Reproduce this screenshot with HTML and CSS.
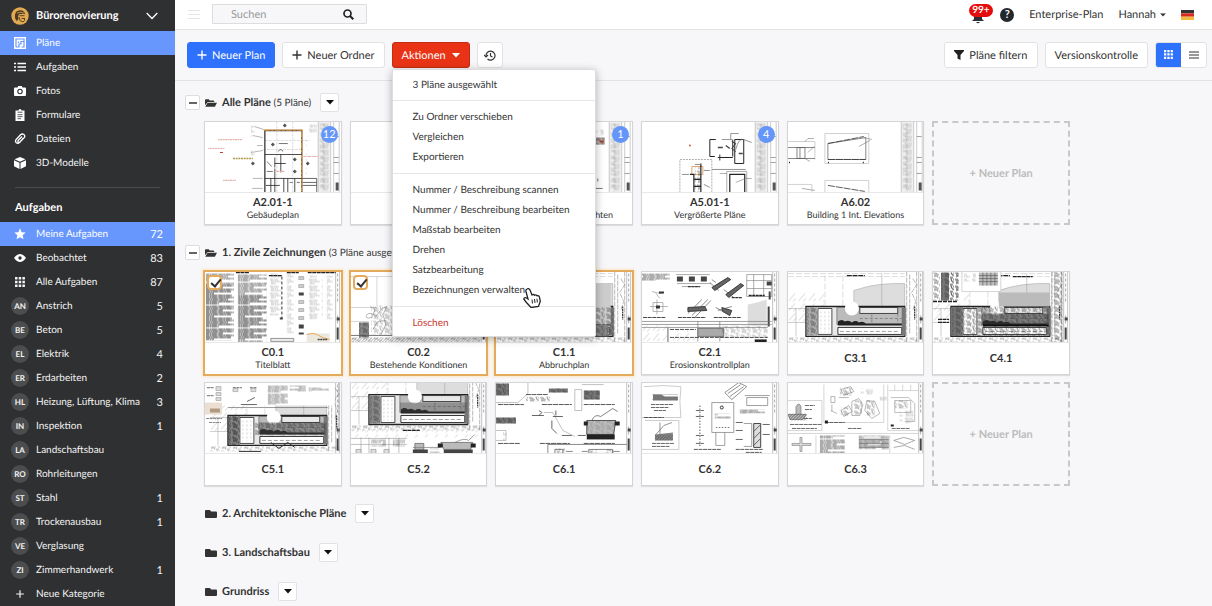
FILE: index.html
```
<!DOCTYPE html>
<html lang="de">
<head>
  <meta charset="UTF-8">
  <meta name="viewport" content="width=device-width, initial-scale=1">
  <title>Bürorenovierung – Pläne</title>
  <link rel="stylesheet" href="styles.css">
</head>
<body>

<!-- shared drawing parts -->
<svg class="defs" aria-hidden="true">
  <defs>
    <pattern id="text" width="31" height="23" patternUnits="userSpaceOnUse">
      <path d="M0 1h27M0 3h31M1 5h22M0 7h31M0 9h14M0 12h31M1 14h29M0 16h18M0 18h31M1 20h25M0 22h9" stroke="#444" stroke-width=".9" stroke-dasharray="4 .5 2 .4 5 .6 1 .3"/>
    </pattern>
    <pattern id="note" width="13" height="14" patternUnits="userSpaceOnUse">
      <path d="M0 1h9M1 3h7M1 5h10M0 8h8M1 10h10M1 12h5" stroke="#999" stroke-width=".7" stroke-dasharray="3 .6 1.5 .5"/>
    </pattern>
    <pattern id="grit" width="11" height="7" patternUnits="userSpaceOnUse">
      <path d="M0 1h3l1 2h2M7 0l1 3 2 1M1 5l3-1 1 2M6 6h3M9 1h1M2 2v2" fill="none" stroke="#333" stroke-width=".6"/>
    </pattern>
    <pattern id="hatch" width="3" height="3" patternUnits="userSpaceOnUse">
      <path d="M0 3L3 0" stroke="#444" stroke-width=".7"/>
    </pattern>
    <pattern id="wide-hatch" width="10" height="10" patternUnits="userSpaceOnUse">
      <path d="M1 9l6-7M5 10l3-3" stroke="#aaa" stroke-width=".5"/>
    </pattern>

    <symbol id="sheet-a" viewBox="0 0 136 71">
      <path d="M113.500 0h12v71h-12z" fill="#f0f0f0"/>
      <path d="M115 2h9v68h-9z" fill="url(#note)"/>
      <path d="M115 2h5v66h-5z" fill="url(#text)" opacity=".3"/>
      <path d="M113.500 0v71M126 0v71M129 0v71M134.500 0v71" stroke="#aaa" stroke-width=".6"/>
      <path d="M129 15h5M129 36h5M129 41h5M129 52h5" stroke="#777" stroke-width=".7"/>
      <path d="M131 61h3v8h-3z" fill="#555"/>
    </symbol>

    <symbol id="sheet-c" viewBox="0 0 136 71">
      <path d="M131 0v71M135 0v71" stroke="#999" stroke-width=".6"/>
      <path d="M133 2v30M133 44v10" stroke="#aaa" stroke-width="1" stroke-dasharray="3 2"/>
      <path d="M132 46h3v3h-3zM132 56h2v12h-2z" fill="#444"/>
    </symbol>

    <symbol id="site" viewBox="0 0 136 71">
      <path d="M0 2h117M0 5h117M37 4v31M55 4v31" stroke="#bbb" stroke-width=".5" stroke-dasharray="6 2"/>
      <path d="M0 21h36v30H0z" fill="url(#wide-hatch)"/>
      <path d="M59 4h18" stroke="#222" stroke-width="1.300" stroke-dasharray="5 .7"/>
      <path d="M66 19q22-8 51-7v23H66z" fill="#ddd" stroke="#999" stroke-width=".5"/>
      <path d="M94 2v34M0 37h18M0 51h18M8 37v28" stroke="#999" stroke-width=".5"/>
      <path d="M18 35h99v30H18z" fill="#e9e9e9" stroke="#222" stroke-width="1.300"/>
      <path d="M19 36h10v28H19z" fill="#aaa"/>
      <path d="M19 36h10v28H19z" fill="url(#grit)"/>
      <path d="M30 37h14v26H30z" fill="#fff" stroke="#222" stroke-width=".8"/>
      <path d="M33 40v21M37 40v21M41 40v21" stroke="#bbb" stroke-width=".6" stroke-dasharray="2 2"/>
      <path d="M49 36h67v17H49z" fill="#bbb" stroke="#555" stroke-width=".6"/>
      <circle cx="64" cy="37" r="7" fill="#fff"/>
      <path d="M72 36h38v6H72z" fill="#e8e8e8" stroke="#222" stroke-width=".8"/>
      <path d="M84 43v9M110 42v11M72 47h42" stroke="#555" stroke-width=".5" stroke-dasharray="3 2"/>
      <path d="M50 50q4-3 7 0q4-2 7 1q4-3 7 0q4-2 7 1h38v2H50z" fill="#222"/>
      <path d="M50 56h64v7H50z" fill="#fff" stroke="#222" stroke-width=".9"/>
      <path d="M52 60h60" stroke="#777" stroke-width=".7" stroke-dasharray="4 2"/>
      <path d="M114 36h4v28h-4z" fill="#777"/>
      <path d="M119 0v71M122 3v60M129 0v71M125 7l4 6-5 8 4 9-3 9" fill="none" stroke="#888" stroke-width=".6" stroke-dasharray="5 1"/>
      <path d="M127 35v13" stroke="#333" stroke-width="1.200" stroke-dasharray="2 .5"/>
      <path d="M0 66h130v5H0z" fill="url(#grit)" opacity=".7"/>
    </symbol>

    <symbol id="folder" viewBox="0 0 12 10">
      <path d="M1 1h4l1 1.500h5q1 0 1 1V8q0 1-1 1H1Q0 9 0 8V2q0-1 1-1z" fill="#333"/>
    </symbol>
    <symbol id="folder-open" viewBox="0 0 13 10">
      <path d="M0 7.500V2q0-1 1-1h3l1.200 1.200H9q1 0 1 1V4H3.500Q2.500 4 2 5z" fill="#333"/>
      <path d="M.3 9L2.800 4.700H13L10.700 9z" fill="#333"/>
    </symbol>
    <symbol id="caret" viewBox="0 0 8 5"><path d="M0 0h8L4 4.600z" fill="currentColor"/></symbol>
    <symbol id="plus" viewBox="0 0 10 10"><path d="M5 .5v9M.5 5h9" stroke="currentColor" stroke-width="1.400"/></symbol>
    <symbol id="grid" viewBox="0 0 10 10">
      <path d="M0 0h2.500v2.500H0zM3.700 0h2.500v2.500H3.700zM7.400 0h2.500v2.500H7.400zM0 3.700h2.500v2.500H0zM3.700 3.700h2.500v2.500H3.700zM7.400 3.700h2.500v2.500H7.400zM0 7.400h2.500v2.500H0zM3.700 7.400h2.500v2.500H3.700zM7.400 7.400h2.500v2.500H7.400z" fill="currentColor"/>
    </symbol>
  </defs>
</svg>

<div class="app">
  <aside class="sidebar">
    <button class="project">
      <svg class="avatar" viewBox="0 0 18 18">
        <circle cx="9" cy="9" r="8.700" fill="#e2aa50"/>
        <path d="M4 8Q4.500 3.500 9 3.200q4.500.3 5 3.800H8.500L7 9l.5 3L6 14Q3.500 12 4 8z" fill="#4b3a22"/>
        <path d="M6 6.200q3-2 7 0" fill="none" stroke="#e2aa50" stroke-width=".8"/>
        <path d="M8.500 8.700h5M10.500 11.500h3M8 10l1 3.500 3 1.500 1.500-1.500v-2.500" fill="none" stroke="#4b3a22" stroke-width=".9"/>
      </svg>
      <span>Bürorenovierung</span>
      <svg class="chevron" viewBox="0 0 12 8"><path d="M.7 1L6 6.500 11.300 1" fill="none" stroke="#fff" stroke-width="1.300"/></svg>
    </button>

    <nav class="nav">
      <a class="nav-item active" href="#">
        <svg class="nav-icon" viewBox="0 0 12 12"><path d="M0 0h12v12H0z" fill="#fff"/><path d="M2 10V2h8v8H7.500M2 10h3V7h2V4.500h3M4.500 4.500V6" fill="none" stroke="#6796fd" stroke-width="1.200"/></svg>
        <span>Pläne</span>
      </a>
      <a class="nav-item" href="#">
        <svg class="nav-icon" viewBox="0 0 12 12"><path d="M0 2.500h2M0 6h2M0 9.500h2M3.500 2.500H12M3.500 6H12M3.500 9.500H12" stroke="#fff" stroke-width="1.700"/></svg>
        <span>Aufgaben</span>
      </a>
      <a class="nav-item" href="#">
        <svg class="nav-icon" viewBox="0 0 12 12"><path d="M1 2.500h2.500L4.300 1h3.400l.8 1.500H11q1 0 1 1V10q0 1-1 1H1q-1 0-1-1V3.500q0-1 1-1z" fill="#fff"/><circle cx="6" cy="6.500" r="2.200" fill="#fff" stroke="#2f3032" stroke-width="1.100"/></svg>
        <span>Fotos</span>
      </a>
      <a class="nav-item" href="#">
        <svg class="nav-icon" viewBox="0 0 12 12"><path d="M1.500 1.500h3Q4.500 0 6 0t1.500 1.500h3V12h-9z" fill="#fff"/><path d="M3.500 3.200h5M3.500 5.700h5M3.500 7.700h5M3.500 9.700h3.500" stroke="#2f3032" stroke-width=".8"/></svg>
        <span>Formulare</span>
      </a>
      <a class="nav-item" href="#">
        <svg class="nav-icon" viewBox="0 0 12 12"><path d="M9.500 5L5.800 9.200Q4 11 2.300 9.800.7 8.200 2.200 6.500L6.500 1.800Q8 .4 9.800 1.500q1.700 1.400.4 3.200L6 9Q5 9.800 4.200 9q-.7-.8.2-1.700L8 3.500" fill="none" stroke="#fff" stroke-width="1.300"/></svg>
        <span>Dateien</span>
      </a>
      <a class="nav-item" href="#">
        <svg class="nav-icon" viewBox="0 0 12 12"><path d="M6 0l5.500 2.200L6 4.700.5 2.200zM0 3.300l5.500 2.400V12L0 9.300zM12 3.300L6.500 5.700V12L12 9.300z" fill="#fff"/></svg>
        <span>3D-Modelle</span>
      </a>
    </nav>

    <h2 class="nav-title">Aufgaben</h2>

    <nav class="nav">
      <a class="nav-item active" href="#">
        <svg class="nav-icon" viewBox="0 0 12 12"><path d="M6 .3l1.600 3.900 4.100.3-3.100 2.700.9 4.100L6 9.200l-3.500 2.100.9-4.100L.3 4.500l4.100-.3z" fill="#fff"/></svg>
        <span>Meine Aufgaben</span><span class="count">72</span>
      </a>
      <a class="nav-item" href="#">
        <svg class="nav-icon" viewBox="0 0 12 12"><path d="M0 6q6-8 12 0-6 8-12 0z" fill="#fff"/><circle cx="6" cy="6" r="1.700" fill="#2f3032"/></svg>
        <span>Beobachtet</span><span class="count">83</span>
      </a>
      <a class="nav-item" href="#">
        <svg class="nav-icon" viewBox="-1 -1 12 12"><use href="#grid" width="10" height="10"/></svg>
        <span>Alle Aufgaben</span><span class="count">87</span>
      </a>
      <a class="nav-item" href="#"><b class="tag">AN</b><span>Anstrich</span><span class="count">5</span></a>
      <a class="nav-item" href="#"><b class="tag">BE</b><span>Beton</span><span class="count">5</span></a>
      <a class="nav-item" href="#"><b class="tag">EL</b><span>Elektrik</span><span class="count">4</span></a>
      <a class="nav-item" href="#"><b class="tag">ER</b><span>Erdarbeiten</span><span class="count">2</span></a>
      <a class="nav-item" href="#"><b class="tag">HL</b><span>Heizung, Lüftung, Klima</span><span class="count">3</span></a>
      <a class="nav-item" href="#"><b class="tag">IN</b><span>Inspektion</span><span class="count">1</span></a>
      <a class="nav-item" href="#"><b class="tag">LA</b><span>Landschaftsbau</span></a>
      <a class="nav-item" href="#"><b class="tag">RO</b><span>Rohrleitungen</span></a>
      <a class="nav-item" href="#"><b class="tag">ST</b><span>Stahl</span><span class="count">1</span></a>
      <a class="nav-item" href="#"><b class="tag">TR</b><span>Trockenausbau</span><span class="count">1</span></a>
      <a class="nav-item" href="#"><b class="tag">VE</b><span>Verglasung</span></a>
      <a class="nav-item" href="#"><b class="tag">ZI</b><span>Zimmerhandwerk</span><span class="count">1</span></a>
      <a class="nav-item" href="#">
        <svg class="nav-icon" viewBox="-2 -2 14 14"><use href="#plus" width="10" height="10"/></svg>
        <span>Neue Kategorie</span>
      </a>
    </nav>
  </aside>

  <main class="main">
    <header class="topbar">
      <button class="menu-toggle" aria-label="Menü">
        <svg width="12" height="10" viewBox="0 0 12 10"><path d="M0 .5h12M0 4.500h12M0 8.500h12" stroke="#e6e6e6"/></svg>
      </button>
      <form class="search">
        <input type="text" placeholder="Suchen" aria-label="Suchen">
        <button type="button" aria-label="Suche starten">
          <svg width="11" height="11" viewBox="0 0 11 11"><circle cx="4.500" cy="4.500" r="3.500" fill="none" stroke="#222" stroke-width="1.700"/><path d="M7 7l3.300 3.300" stroke="#222" stroke-width="2"/></svg>
        </button>
      </form>
      <div class="account">
        <button class="bell" aria-label="Benachrichtigungen">
          <svg width="14" height="14" viewBox="0 0 14 14"><path d="M1 11l2-2V6q0-4 4-4t4 4v3l2 2z" fill="#2b2f36"/><path d="M5 12h4q-2 2.600-4 0z" fill="#2b2f36"/></svg>
          <span class="bell-count">99+</span>
        </button>
        <button class="help" aria-label="Hilfe">?</button>
        <a href="#">Enterprise-Plan</a>
        <button class="user">Hannah <svg width="6" height="4" viewBox="0 0 8 5"><use href="#caret"/></svg></button>
        <button class="flag" aria-label="Sprache: Deutsch">
          <svg width="13" height="10" viewBox="0 0 13 10"><path d="M0 0h13v3.400H0z" fill="#333"/><path d="M0 3.400h13v3.300H0z" fill="#d9281e"/><path d="M0 6.700h13V10H0z" fill="#f0b840"/></svg>
        </button>
      </div>
    </header>

    <div class="toolbar">
      <button class="btn primary"><svg width="10" height="10" viewBox="0 0 10 10"><use href="#plus"/></svg>Neuer Plan</button>
      <button class="btn"><svg width="10" height="10" viewBox="0 0 10 10"><use href="#plus"/></svg>Neuer Ordner</button>
      <div class="actions">
        <button class="btn danger" aria-expanded="true">Aktionen<svg width="8" height="5" viewBox="0 0 8 5"><use href="#caret"/></svg></button>
        <div class="menu">
          <p class="menu-head">3 Pläne ausgewählt</p>
          <div class="menu-group">
            <button>Zu Ordner verschieben</button>
            <button>Vergleichen</button>
            <button>Exportieren</button>
          </div>
          <div class="menu-group">
            <button>Nummer / Beschreibung scannen</button>
            <button>Nummer / Beschreibung bearbeiten</button>
            <button>Maßstab bearbeiten</button>
            <button>Drehen</button>
            <button>Satzbearbeitung</button>
            <button>Bezeichnungen verwalten</button>
          </div>
          <div class="menu-group">
            <button class="delete">Löschen</button>
          </div>
          <svg class="pointer" viewBox="0 0 18 20"><path d="M4 1q2-1 3 1l2 5q1.500-1.200 2.500.3 1.500-1 2.500.5 2-.6 2.500 1.500l.8 4-1.800 5.200-7.500 1L3 14 .8 11q.5-2 2.700-1l1.500 1L2.800 3Q2.700 1.500 4 1z" fill="#fff" stroke="#222" stroke-width="1.300"/><path d="M9 11.500l.5 4M11.500 11l.5 4M14 10.700l.3 3.800" stroke="#222"/></svg>
        </div>
      </div>
      <button class="btn square" aria-label="Verlauf">
        <svg width="12" height="11" viewBox="0 0 12 11"><path d="M2 5.500A4.500 4.500 0 1 1 3.500 9M0 5l2 2 2-2M6.500 3v3l2 1" fill="none" stroke="#333" stroke-width="1.200"/></svg>
      </button>
      <button class="btn filter"><svg width="10" height="10" viewBox="0 0 10 10"><path d="M0 0h10v1L6.500 5v5L3.500 8.500V5L0 1z" fill="#222"/></svg>Pläne filtern</button>
      <button class="btn">Versionskontrolle</button>
      <div class="view-switch">
        <button class="on" aria-label="Raster"><svg width="9" height="9" viewBox="0 0 10 10"><use href="#grid"/></svg></button>
        <button aria-label="Liste"><svg width="10" height="8" viewBox="0 0 10 8"><path d="M0 1h10M0 4h10M0 7h10" stroke="#333" stroke-width="1.200"/></svg></button>
      </div>
    </div>

    <div class="content">
      <section class="folder">
        <div class="folder-head">
          <button class="collapse" aria-label="Einklappen"></button>
          <svg class="folder-icon" viewBox="0 0 13 10"><use href="#folder-open"/></svg>
          <h3>Alle Pläne <span>(5 Pläne)</span></h3>
          <button class="more" aria-label="Optionen"><svg width="8" height="5" viewBox="0 0 8 5"><use href="#caret"/></svg></button>
        </div>
        <div class="plans">
          <article class="plan">
            <svg class="thumb" viewBox="0 0 136 71" preserveAspectRatio="xMidYMid slice">
              <use href="#sheet-a"/>
              <path d="M72 0v71M88 0v71M60 19h45M58 28h40" stroke="#bbb" stroke-width=".5" stroke-dasharray="3 1"/>
              <path d="M60 71V9h37v62" fill="none" stroke="#444" stroke-width="1.400"/>
              <path d="M59 8.500h39M97 10v60" stroke="#df973c" stroke-width="1.300" stroke-dasharray="6 1 3 1"/>
              <path d="M60 33h37M76 33v18M60 57h37M70 42h11M70 47v24M66 57v14M83 57v14M90 57v14M61 64h14M70 36v10M79 57v14" stroke="#222" stroke-width=".8"/>
              <path d="M97 57h15M98 61h14M98 64h14M112 57v14" stroke="#444" stroke-width=".8"/>
              <path d="M80 2l2 2-2 2-2-2zM68 21l2 2-2 2-2-2zM90 36l2 2-2 2-2-2zM90 48l2 2-2 2-2-2zM48 40l2 2-2 2-2-2zM103 40l2 2-2 2-2-2z" fill="#555"/>
              <path d="M74 22h9M73 30q4-4 5 0M62 40l5 5M62 50h6M85 61h3M92 61h3" fill="none" stroke="#555" stroke-width=".8"/>
              <path d="M13 18h24M3 27h17M18 59h13M70 50h10M97 35h17" stroke="#e4b4ab" stroke-width="1.200" stroke-dasharray="1 .5 3 .5"/>
              <path d="M15 31h3" stroke="#c04030"/>
              <path d="M28 37h20" stroke="#b39a4c" stroke-width="1.500" stroke-dasharray="2 .7"/>
              <path d="M50 5l9 3M48 14l10 2M46 31l12-2M48 57h10M47 67h11M52 24h6" stroke="#999" stroke-width=".7"/>
              <path d="M46 4h5v11h-5zM46 29h5v5h-5zM104 3h8v8h-8zM101 11h3v52h-3z" fill="url(#note)"/>
            </svg>
            <span class="badge">12</span>
            <div class="plan-label"><b>A2.01-1</b><span>Gebäudeplan</span></div>
          </article>
          <article class="plan">
            <svg class="thumb" viewBox="0 0 136 71" preserveAspectRatio="xMidYMid slice"><use href="#sheet-a"/></svg>
            <div class="plan-label"></div>
          </article>
          <article class="plan">
            <svg class="thumb" viewBox="0 0 136 71" preserveAspectRatio="xMidYMid slice">
              <use href="#sheet-a"/>
              <path d="M94 16h15v7H94z" fill="#b9a9a4"/><path d="M94 16h15v7H94z" fill="url(#grit)"/>
              <path d="M98 8h10v6H98z" fill="url(#note)"/>
              <path d="M104 20h4" stroke="#9c4636" stroke-width="2"/>
              <path d="M102 57v3M98 67h9" stroke="#777"/>
            </svg>
            <span class="badge">1</span>
            <div class="plan-label"><b></b><span>Gebäudeaußenansichten</span></div>
          </article>
          <article class="plan">
            <svg class="thumb" viewBox="0 0 136 71" preserveAspectRatio="xMidYMid slice">
              <use href="#sheet-a"/>
              <circle cx="48" cy="24" r="1" fill="#c0603a"/>
              <path d="M68 18v17M68 18h6M68 35h5M76 36h15M102 18v24h-9V18zM91 18v17" fill="none" stroke="#222"/>
              <path d="M78 33v6M90 20l4 2-4 5 4 3" fill="none" stroke="#333"/>
              <path d="M89 18V12h8M94 28q3-12 8-10l8 3M80 18h10" fill="none" stroke="#666" stroke-width=".7"/>
              <path d="M76 26h5M84 24l4 3M97 32h4" stroke="#444" stroke-width="1.400"/>
              <path d="M38 71V38h32v33" fill="none" stroke="#999" stroke-width=".8" stroke-dasharray="2 1"/>
              <path d="M50 45h11v8h-11z" fill="none" stroke="#d78d4d" stroke-width=".8"/>
              <path d="M52 71V53h-4M59 42v29M52 58h7M52 65h7" fill="none" stroke="#222" stroke-width="1.200"/>
              <path d="M53 46h5v25h-5z" fill="url(#grit)"/>
              <path d="M40 53h7M62 49h6M62 63l6 3M53 43h6M70 48h34" stroke="#777" stroke-width=".8"/>
              <path d="M88 71V53h15v18" fill="none" stroke="#222" stroke-width="1.200"/>
              <path d="M85 71V50h20v21M94 61l10-4h6M78 52h7" fill="none" stroke="#777" stroke-width=".6"/>
            </svg>
            <span class="badge">4</span>
            <div class="plan-label"><b>A5.01-1</b><span>Vergrößerte Pläne</span></div>
          </article>
          <article class="plan">
            <svg class="thumb" viewBox="0 0 136 71" preserveAspectRatio="xMidYMid slice">
              <use href="#sheet-a"/>
              <path d="M37 12h44v30H37zM37 71V59h44v12M0 20h27v18M0 63h24v8" fill="none" stroke="#bbb" stroke-width=".7"/>
              <path d="M40 38h38V16L40 22z" fill="none" stroke="#555" stroke-width=".7"/>
              <path d="M40 22l36-7M40 38h38M40 64l37 6" stroke="#333" stroke-width=".8" stroke-dasharray="7 1"/>
              <path d="M76 16l8 2M71 25l11-6M17 20l3-3h6M20 31l6-6M17 37l5 3M14 67l13 2" fill="none" stroke="#777" stroke-width=".6"/>
              <path d="M0 37h27M9 26h8v11H9zM12 26v11M0 26h27" fill="none" stroke="#555" stroke-width=".7"/>
              <path d="M40 41h1M75 41h1M1 41h1" stroke="#222" stroke-width="1.500"/>
            </svg>
            <div class="plan-label"><b>A6.02</b><span>Building 1 Int. Elevations</span></div>
          </article>
          <button class="new-plan">+ Neuer Plan</button>
        </div>
      </section>

      <section class="folder">
        <div class="folder-head">
          <button class="collapse" aria-label="Einklappen"></button>
          <svg class="folder-icon" viewBox="0 0 13 10"><use href="#folder-open"/></svg>
          <h3>1. Zivile Zeichnungen <span>(3 Pläne ausgewählt)</span></h3>
          <button class="more" aria-label="Optionen"><svg width="8" height="5" viewBox="0 0 8 5"><use href="#caret"/></svg></button>
        </div>
        <div class="plans">
          <article class="plan selected">
            <input type="checkbox" class="pick" aria-label="C0.1 auswählen" checked>
            <svg class="thumb" viewBox="0 0 136 71" preserveAspectRatio="xMidYMid slice">
              <use href="#sheet-c"/>
              <path d="M1 2h28v67H1zM33 3h29v68H33z" fill="url(#text)"/>
              <path d="M1 13h26v55H1zM34 24h27v44H34z" fill="url(#text)" opacity=".6"/>
              <path d="M64 2h14v42H64zM82 2h9v60h-9zM104 4h8v44h-8zM112 8h6v38h-6zM122 4h8v44h-8z" fill="url(#note)"/>
              <path d="M64 4h13M82 1h12M103 1h28M31 1h13" stroke="#222" stroke-width="1.200" stroke-dasharray="4 .5"/>
              <path d="M77 5v42" stroke="#777" stroke-width="1.500" stroke-dasharray="3 2"/>
              <path d="M75 46h3v2h-3zM94 21h5v3h-5zM94 53h5v4h-5zM94 61h5v2h-5z" fill="#444"/>
              <path d="M94 5h5v3h-5zM94 13h5v3h-5zM94 29h5v3h-5zM94 37h5v3h-5zM94 45h5v3h-5z" fill="#ccc" stroke="#888" stroke-width=".5"/>
              <path d="M66 67h23v3H66z" fill="#eee" stroke="#555" stroke-width=".6"/>
              <path d="M102 62h23v9h-23z" fill="#ebe8df"/>
              <path d="M102 63q8-2 12 1t11 4" fill="none" stroke="#e8a458"/>
              <path d="M113 68h10" stroke="#444" stroke-width="1.500" stroke-dasharray="2 .5"/>
            </svg>
            <div class="plan-label"><b>C0.1</b><span>Titelblatt</span></div>
          </article>
          <article class="plan selected">
            <input type="checkbox" class="pick" aria-label="C0.2 auswählen" checked>
            <svg class="thumb" viewBox="0 0 136 71" preserveAspectRatio="xMidYMid slice">
              <use href="#sheet-c"/>
              <path d="M0 5h130M0 36h27M26 5v30M0 50h18" stroke="#bbb" stroke-width=".6"/>
              <path d="M8 51h10v15H8z" fill="#888"/><path d="M8 51h10v15H8z" fill="url(#grit)"/>
              <path d="M19 35l5 3-3 8q-8 2-5-3 4-3 9 2l6-8 5-2-4 8 3 10-5 10M22 58l5-8 8-1" fill="none" stroke="#888" stroke-width=".6"/>
              <path d="M20 34h25v30H20zM0 66h130v5H0z" fill="url(#grit)" opacity=".6"/>
              <path d="M0 64h130" stroke="#555" stroke-width=".8"/>
              <path d="M0 66h130v5H0z" fill="url(#hatch)" opacity=".6"/>
            </svg>
            <div class="plan-label"><b>C0.2</b><span>Bestehende Konditionen</span></div>
          </article>
          <article class="plan selected">
            <input type="checkbox" class="pick" aria-label="C1.1 auswählen" checked>
            <svg class="thumb" viewBox="0 0 136 71" preserveAspectRatio="xMidYMid slice">
              <use href="#sheet-c"/><use href="#site"/>
              <path d="M95 12h20v41H95z" fill="#ccc"/><path d="M95 53h18v12H95z" fill="#888"/>
              <path d="M95 36h23v30H95z" fill="url(#grit)"/>
            </svg>
            <div class="plan-label"><b>C1.1</b><span>Abbruchplan</span></div>
          </article>
          <article class="plan">
            <svg class="thumb" viewBox="0 0 136 71" preserveAspectRatio="xMidYMid slice">
              <use href="#sheet-c"/>
              <path d="M0 2h28v7H0z" fill="url(#text)"/>
              <path d="M35 5h6v5h-6zM47 5h6v5h-6zM59 5h6v5h-6z" fill="#444"/>
              <path d="M34 3h34M35 12h34M40 15h19M105 3v22h25V3zM112 3v22M122 3v22M105 9h25M105 17h25" fill="none" stroke="#888" stroke-width=".7"/>
              <path d="M70 16l16-10 3 2-16 11zM84 23l15-11 3 2-15 12zM46 36l17-1 2 4-19 1zM80 36l10 3-2 5-7-4z" fill="#666" stroke="#222" stroke-width=".8"/>
              <path d="M68 11l9 8M70 8l4 3M82 18l10 8M46 42l14-14M50 44l16-16M53 46l16-17M76 39l14-4M74 36l14 8" stroke="#555" stroke-width=".7"/>
              <path d="M10 20l8 2 4-1M14 22l4 5M11 31h10v9H11zM15 28v15M8 35h18" fill="none" stroke="#888" stroke-width=".6"/>
              <path d="M14 34h4v3h-4zM17 20h5v2h-5z" fill="#333"/>
              <path d="M1 46h23M36 46h28M72 46h27" stroke="#444" stroke-width="1" stroke-dasharray="4 .6"/>
              <path d="M46 15h12M90 26h10" stroke="#333" stroke-width="1.300" stroke-dasharray="3 .5"/>
              <path d="M106 33q10-2 19-5v26h-19z" fill="#ddd"/>
              <path d="M107 24h16" stroke="#222" stroke-width="1.400" stroke-dasharray="3 .5"/>
              <path d="M125 10h5v4h-5zM127 20h2v8h-2zM126 35v20h2V35z" fill="#444"/>
              <path d="M0 50h130M0 53h130M26 56h100M26 56v15M0 56h26v15M56 50v20M78 50v20" stroke="#777" stroke-width=".7" fill="none"/>
              <path d="M0 54h26v16H0zM28 58h26v12H28z" fill="url(#wide-hatch)"/>
              <path d="M56 57h26v8H56z" fill="#aaa" stroke="#444" stroke-width=".6"/>
              <path d="M80 54h46v12H80z" fill="url(#grit)" opacity=".6"/><path d="M113 68h12v3h-12z" fill="#222"/>
              <path d="M28 58h26M28 66h98" stroke="#222" stroke-width=".8" stroke-dasharray="4 1"/>
            </svg>
            <div class="plan-label"><b>C2.1</b><span>Erosionskontrollplan</span></div>
          </article>
          <article class="plan">
            <svg class="thumb" viewBox="0 0 136 71" preserveAspectRatio="xMidYMid slice"><use href="#sheet-c"/><use href="#site"/></svg>
            <div class="plan-label"><b>C3.1</b></div>
          </article>
          <article class="plan">
            <svg class="thumb" viewBox="0 0 136 71" preserveAspectRatio="xMidYMid slice">
              <use href="#sheet-c"/><use href="#site"/>
              <path d="M66 21h51v14H66z" fill="#bbb"/>
              <path d="M19 35h10v30H19zM49 42h67v12H49z" fill="#333" opacity=".45"/>
              <path d="M29 35h88v30H29zM119 0h11v71h-11z" fill="url(#grit)"/>
              <path d="M0 0h28v32H0z" fill="#fff"/>
              <path d="M0 1h7v28H0zM17 1h9v28h-9z" fill="url(#grit)"/>
              <path d="M8 1h8v28H8z" fill="#777"/><path d="M8 1h17v28H8z" fill="url(#grit)"/>
              <path d="M0 30h24" stroke="#222" stroke-width="1.500" stroke-dasharray="4 1"/>
              <path d="M29 0h39v20H29z" fill="#fff" stroke="#ccc" stroke-width=".8"/>
              <path d="M31 2h12v8H31z" fill="url(#note)"/><path d="M46 1h19v13H46z" fill="#bbb"/>
              <path d="M46 4h19M46 7h19M46 10h19M50 1v13M54 1v13M58 1v13M62 1v13" stroke="#555" stroke-width=".6"/>
              <path d="M80 5h20M5 48h11M5 51h11" stroke="#222" stroke-width="1.300" stroke-dasharray="4 .5"/>
              <path d="M50 54h66" stroke="#111" stroke-width="2"/>
            </svg>
            <div class="plan-label"><b>C4.1</b></div>
          </article>
          <article class="plan">
            <svg class="thumb" viewBox="0 0 136 71" preserveAspectRatio="xMidYMid slice">
              <use href="#sheet-c"/>
              <g transform="translate(5 -2)"><use href="#site" width="136" height="71"/><path d="M18 36h11v29H18zM49 42h67v12H49z" fill="#444" opacity=".4"/><path d="M18 35h12v30H18zM45 42h72v13H45z" fill="url(#grit)"/></g>
              <path d="M0 0h130v23H0z" fill="#fff"/>
              <path d="M63 3h20v19H63zM85 3h16v6H85zM104 5h20v4h-20z" fill="url(#text)" opacity=".8"/>
              <path d="M2 5h7M28 5h9M2 13h7M2 21h7M45 5h7M1 36h16M4 40h12" stroke="#888" stroke-width="1.200" stroke-dasharray="3 .6"/>
              <path d="M11 4h5v4h-5zM11 10h5v3h-5zM11 15h5v3h-5zM28 6h5v3h-5zM46 6h5v3h-5z" fill="#ddd" stroke="#888" stroke-width=".5"/>
              <path d="M0 20h17v12H0z" fill="#eadfd0"/><path d="M5 26h10v4H5z" fill="#b09a80"/>
              <path d="M36 22h16M42 19l8-4" stroke="#555" stroke-width=".9"/>
              <path d="M23 25h100" stroke="#555" stroke-width=".6"/>
              <path d="M66 60l8 6 9-6 7 5M34 69h22" fill="none" stroke="#333"/>
            </svg>
            <div class="plan-label"><b>C5.1</b></div>
          </article>
          <article class="plan">
            <svg class="thumb" viewBox="0 0 136 71" preserveAspectRatio="xMidYMid slice">
              <use href="#sheet-c"/>
              <g transform="translate(0 -23)"><use href="#site" width="136" height="71"/><path d="M19 36h10v28H19zM49 43h67v10H49z" fill="#444" opacity=".35"/></g>
              <path d="M0 43h130v12H0z" fill="url(#wide-hatch)"/>
              <path d="M52 48h17" stroke="#222" stroke-width="1.200" stroke-dasharray="4 .5"/>
              <path d="M0 56h56M0 62h56M10 55v16M18 55v16M38 55v16M48 55v16" stroke="#999" stroke-width=".6"/>
              <path d="M20 56h15v8H20zM42 56h12v8H42zM79 66h10v5H79z" fill="url(#text)" opacity=".7"/>
              <path d="M5 67h5v4H5zM20 67h5v4h-5zM33 67h5v4h-5z" fill="#ddd" stroke="#888" stroke-width=".6"/>
              <path d="M62 67h15v4H62zM93 67h29v4H93z" fill="#444"/>
              <path d="M64 61h9v6h-9zM90 60h32l-2 7H93z" fill="#bbb" stroke="#444" stroke-width=".6"/>
              <path d="M104 60q10-5 14-2l6-6M62 65h28" fill="none" stroke="#777" stroke-width=".7"/>
              <path d="M87 61h5v4h-5zM120 61h5v4h-5z" fill="#222"/>
            </svg>
            <div class="plan-label"><b>C5.2</b></div>
          </article>
          <article class="plan">
            <svg class="thumb" viewBox="0 0 136 71" preserveAspectRatio="xMidYMid slice">
              <use href="#sheet-c"/>
              <path d="M0 1h13v12H0zM53 6h19v4H53zM0 35h20v6H0zM88 8h16v9H88z" fill="#777"/>
              <path d="M0 1h13v12H0zM53 6h19v4H53zM0 35h20v6H0zM30 14h25v5H30zM88 8h16v9H88z" fill="url(#grit)"/>
              <path d="M0 20h22l10-9V0M79 7h7v21h-7zM86 2h22M0 48h10v10H0M48 30h9l10 18 12 6" fill="none" stroke="#999" stroke-width=".6"/>
              <path d="M2 22h26M46 22h30M88 22h31M2 61h22M44 61h30M88 61h31M30 12h22" stroke="#444" stroke-width=".9" stroke-dasharray="5 .6"/>
              <path d="M43 28l3 2-3 3M60 28v5M56 38v8l5 5M66 53h10M82 53h8M36 33h12M57 34h10" fill="none" stroke="#555" stroke-width=".9"/>
              <path d="M91 38h29l-2 14H91z" fill="#bbb" stroke="#333" stroke-width=".8"/>
              <path d="M91 38h28v14H91z" fill="url(#grit)" opacity=".4"/>
              <path d="M91 52h28v5H91z" fill="#222"/>
              <path d="M88 39h4v4h-4zM119 39h5v4h-5z" fill="#222"/>
              <path d="M96 38q3-7 9-4l12-8 5 3" fill="none" stroke="#666" stroke-width=".8"/>
              <path d="M7 49h5v9H7z" fill="url(#note)"/>
              <path d="M52 71V62h79M59 67h8v4h-8zM93 67h24v4H93zM70 69h7M86 69h6M118 69h6" fill="none" stroke="#555" stroke-width=".7"/>
              <path d="M60 66h9v5h-9zM93 67h8v4h-8zM110 67h8v4h-8z" fill="url(#grit)"/>
            </svg>
            <div class="plan-label"><b>C6.1</b></div>
          </article>
          <article class="plan">
            <svg class="thumb" viewBox="0 0 136 71" preserveAspectRatio="xMidYMid slice">
              <use href="#sheet-c"/>
              <path d="M2 4q20-2 37 0-2 15 0 31M3 38h34v29M0 35h39M0 67h37M10 12h26M10 17h26" fill="none" stroke="#aaa" stroke-width=".6"/>
              <path d="M11 12h8l4 2h13v4H11z" fill="#777"/>
              <path d="M9 22h22M9 25h18M12 28h12M10 61h22M10 64h18M54 28h8M54 34h8M54 53h8M54 61h8" stroke="#555" stroke-width=".9" stroke-dasharray="4 .5"/>
              <path d="M13 52l18-2v8H13z" fill="#888"/><path d="M13 52h18v6H13z" fill="url(#hatch)"/>
              <path d="M14 52l8-9 8-3M18 40v12" fill="none" stroke="#666" stroke-width=".7"/>
              <path d="M83 10L97 0l8 4-15 13zM86 11L99 2M88 14l14-10" fill="none" stroke="#777" stroke-width=".8"/>
              <path d="M70 20h22v30H70zM74 50v13h9V50M105 15h21v8h-21zM103 13h25M102 41h8v23h-8" fill="none" stroke="#777" stroke-width=".7"/>
              <path d="M73 31h16v5H73zM98 27h25v4H98z" fill="url(#text)"/>
              <circle cx="80" cy="25" r="1.500" fill="none" stroke="#333"/>
              <path d="M74 45h14M58 23v42" stroke="#777" stroke-width="1.200" stroke-dasharray="1.500 1.500"/>
              <path d="M112 41h7v24h-7z" fill="#ddd" stroke="#333" stroke-width=".9"/>
              <path d="M112 49l7-7M112 56l7-7M112 63l7-7M94 40h7M94 48h7M94 57h7M121 42h7M121 52h7" stroke="#555" stroke-width=".9"/>
              <path d="M2 35h20M52 67h27M94 67h27M104 70h16" stroke="#333" stroke-width=".8" stroke-dasharray="4 .6"/>
            </svg>
            <div class="plan-label"><b>C6.2</b></div>
          </article>
          <article class="plan">
            <svg class="thumb" viewBox="0 0 136 71" preserveAspectRatio="xMidYMid slice">
              <use href="#sheet-c"/>
              <path d="M36 2v38h60V2M0 18h34v30H0M100 2v46h31M0 51h131M28 53v18M102 53v18M101 8h30M107 2v6M115 2v6M123 2v6" fill="none" stroke="#bbb" stroke-width=".6"/>
              <path d="M8 32v-8q3-5 5 0v8M0 32h18l-3 5H2z" fill="#bbb" stroke="#777" stroke-width=".7"/>
              <path d="M0 31h19v7H2z" fill="url(#hatch)"/>
              <path d="M17 23h10M17 27h7M16 36h8M2 42h32M4 46h25M37 40h20M60 46h14M104 46h18" stroke="#444" stroke-width=".8" stroke-dasharray="4 .6"/>
              <path d="M43 14h4v6h-4zM44 22v7M43 28l6 3M53 7l10-3 3 5-10 4zM51 15h10M64 19l7-3 4 6-3 11h-8zM79 18l8 1 5 12-8 5-7-8zM53 28l8-5 3 6-8 5z" fill="none" stroke="#888" stroke-width=".6"/>
              <path d="M52 5h12v8H52zM65 18h9v14h-9zM79 18h9v15h-9zM53 25h8v8h-8z" fill="url(#grit)" opacity=".8"/>
              <path d="M73 6h12v6H73zM92 14h7v4h-7zM112 28h14v13h-14z" fill="url(#note)"/>
              <path d="M103 15h18l6 6v18h-10M107 18h16v12h-16z" fill="none" stroke="#999" stroke-width=".6"/>
              <path d="M107 18h14v8h-14z" fill="url(#grit)" opacity=".8"/>
              <path d="M37 38h3v3h-3zM103 42h3v2h-3z" fill="#222"/>
              <path d="M4 61h8v-6h2v6h9v2h-9v6h-2v-6H4z" fill="#ddd" stroke="#777" stroke-width=".6"/>
              <path d="M32 53h25v18H32z" fill="url(#text)"/>
              <path d="M71 55h30v10H71z" fill="#ddd"/>
              <path d="M71 53h30v14H71z" fill="url(#text)" opacity=".8"/>
              <path d="M71 57h30M71 61h30M71 65h30" stroke="#666" stroke-width=".6"/>
              <path d="M106 58l10-3 11 3-10 4zM106 65l11-2 10 4" fill="none" stroke="#888" stroke-width=".7"/>
            </svg>
            <div class="plan-label"><b>C6.3</b></div>
          </article>
          <button class="new-plan">+ Neuer Plan</button>
        </div>
      </section>

      <section class="folder closed">
        <div class="folder-head">
          <svg class="folder-icon" viewBox="0 0 12 10"><use href="#folder"/></svg>
          <h3>2. Architektonische Pläne</h3>
          <button class="more" aria-label="Optionen"><svg width="8" height="5" viewBox="0 0 8 5"><use href="#caret"/></svg></button>
        </div>
      </section>
      <section class="folder closed">
        <div class="folder-head">
          <svg class="folder-icon" viewBox="0 0 12 10"><use href="#folder"/></svg>
          <h3>3. Landschaftsbau</h3>
          <button class="more" aria-label="Optionen"><svg width="8" height="5" viewBox="0 0 8 5"><use href="#caret"/></svg></button>
        </div>
      </section>
      <section class="folder closed">
        <div class="folder-head">
          <svg class="folder-icon" viewBox="0 0 12 10"><use href="#folder"/></svg>
          <h3>Grundriss</h3>
          <button class="more" aria-label="Optionen"><svg width="8" height="5" viewBox="0 0 8 5"><use href="#caret"/></svg></button>
        </div>
      </section>
    </div>
  </main>
</div>

</body>
</html>
```

FILE: styles.css
```
* {
  box-sizing: border-box;
}

body {
  margin: 0;
  font-family: Lato, "Open Sans", sans-serif;
  font-size: 11px;
  color: #333;
  background: #f7f7f9;
  text-rendering: geometricPrecision;
}

button {
  font: inherit;
  color: inherit;
  text-rendering: inherit;
  background: none;
  border: 0;
  padding: 0;
  cursor: pointer;
}

a {
  color: inherit;
  text-decoration: none;
}

.defs {
  position: absolute;
  width: 0;
  height: 0;
}

.app {
  display: flex;
  min-height: 100vh;
}

/* Sidebar */
.sidebar {
  width: 175px;
  flex-shrink: 0;
  background: #2f3032;
  color: #f4f4f4;
}

.project {
  display: flex;
  align-items: center;
  width: 100%;
  height: 31px;
  padding: 0 17px 0 11px;
  gap: 7px;
  font-weight: bold;
  color: #fff;
}

.avatar {
  width: 18px;
  height: 18px;
}

.chevron {
  width: 12px;
  height: 8px;
  margin-left: auto;
}

.nav-item {
  display: flex;
  align-items: center;
  height: 24px;
  padding: 0 12px 0 11px;
  gap: 7px;
  font-size: 10px;
  white-space: nowrap;
}

.nav-item.active {
  background: #6796fd;
  color: #fff;
}

.nav-icon {
  width: 12px;
  height: 12px;
  margin: 0 3px;
}

.tag {
  width: 18px;
  height: 18px;
  line-height: 18px;
  border-radius: 50%;
  background: #4c4d4f;
  font-size: 8px;
  text-align: center;
}

.count {
  margin-left: auto;
  font-size: 11px;
}

.nav-title {
  margin: 12px 15px 0;
  padding: 13px 0 7px;
  border-top: 1px solid #4c4d4f;
  font-size: 11px;
  line-height: 14px;
  color: #fff;
}

/* Top bar */
.main {
  flex: 1;
  min-width: 0;
}

.topbar {
  display: flex;
  align-items: center;
  height: 30px;
  padding: 0 18px 0 13px;
  gap: 12px;
  background: #fff;
  border-bottom: 1px solid #e3e3e5;
}

.menu-toggle svg,
.search svg,
.flag svg,
.bell svg {
  display: block;
}

.search {
  display: flex;
  align-items: center;
  width: 155px;
  height: 20px;
  margin-bottom: 1px;
  padding-right: 12px;
  background: #f7f7f9;
  border: 1px solid #ddd;
  border-radius: 1px;
}

.search input {
  flex: 1;
  min-width: 0;
  padding: 0 0 0 18px;
  border: 0;
  outline: none;
  background: none;
  font: inherit;
  text-rendering: inherit;
}

.search input::placeholder {
  color: #999;
}

.account {
  display: flex;
  align-items: center;
  gap: 15px;
  margin-left: auto;
}

.bell {
  position: relative;
  padding-top: 4px;
}

.bell-count {
  position: absolute;
  top: -2px;
  left: -2px;
  height: 13px;
  padding: 0 3px;
  border-radius: 7px;
  background: #e50c0c;
  color: #fff;
  font-size: 10px;
  font-weight: bold;
  line-height: 13px;
}

.help {
  width: 14px;
  height: 14px;
  border-radius: 50%;
  background: #23272e;
  color: #fff;
  font-weight: bold;
  line-height: 14px;
}

.user {
  display: flex;
  align-items: center;
  gap: 4px;
}

/* Toolbar */
.toolbar {
  display: flex;
  align-items: center;
  height: 51px;
  padding: 0 5px 0 12px;
  gap: 7px;
  border-bottom: 1px solid #e3e3e5;
}

.btn {
  display: flex;
  align-items: center;
  height: 26px;
  padding: 0 9px;
  gap: 5px;
  background: #fff;
  border: 1px solid #e2e2e4;
  border-radius: 3px;
  white-space: nowrap;
}

.btn.primary {
  background: #2e71fd;
  border-color: #2e71fd;
  color: #fff;
}

.btn.danger {
  gap: 6px;
  background: #e93316;
  border-color: #c42d14;
  color: #fff;
}

.btn.square {
  width: 26px;
  padding: 0;
  justify-content: center;
}

.btn.filter {
  margin-left: auto;
}

.view-switch {
  display: flex;
  height: 26px;
  background: #fff;
  border: 1px solid #e2e2e4;
  border-radius: 3px;
  overflow: hidden;
}

.view-switch button {
  width: 25px;
}

.view-switch .on {
  background: #2e71fd;
  color: #fff;
}

.actions {
  position: relative;
}

.menu {
  position: absolute;
  top: 27px;
  left: 0;
  z-index: 10;
  width: 204px;
  background: #fff;
  border: 1px solid #ddd;
  border-radius: 2px;
  box-shadow: 0 2px 8px rgba(0, 0, 0, 0.3);
  font-size: 10px;
  white-space: nowrap;
}

.menu-head {
  margin: 0;
  padding: 0 20px;
  line-height: 30px;
}

.menu-group {
  padding: 6px 0;
  border-top: 1px solid #e6e6e6;
}

.menu-group:nth-last-of-type(1) {
  padding-bottom: 3px;
}

.menu-group button {
  display: block;
  width: 100%;
  padding: 0 20px;
  line-height: 20px;
  text-align: left;
}

.menu-group .delete {
  color: #c8372d;
}

.pointer {
  position: absolute;
  right: 54px;
  bottom: 28px;
  width: 18px;
  height: 20px;
}

/* Folders and plans */
.content {
  padding: 12px 142px 0 10px;
}

.folder {
  margin-bottom: 18px;
}

.folder.closed {
  margin-bottom: 20px;
  padding-left: 20px;
}

.folder-head {
  display: flex;
  align-items: center;
  height: 19px;
  gap: 5px;
}

.folder-head h3 {
  margin: 0;
  font-size: 11px;
  white-space: nowrap;
}

.folder-head h3 span {
  font-size: 10px;
  font-weight: normal;
}

.folder-icon {
  width: 12px;
  height: 10px;
}

.collapse {
  display: flex;
  align-items: center;
  justify-content: center;
  width: 15px;
  height: 15px;
  background: #fff;
  border: 1px solid #ddd;
  border-radius: 2px;
}

.collapse::before {
  content: "";
  width: 8px;
  height: 2px;
  background: #666;
}

.more {
  width: 19px;
  height: 19px;
  margin-left: 4px;
  background: #fff;
  border: 1px solid #e2e2e4;
  border-radius: 2px;
  color: #111;
  line-height: 0;
}

.plans {
  display: grid;
  grid-template-columns: repeat(auto-fill, minmax(132px, 1fr));
  gap: 7px 8px;
  padding: 9px 0 0 19px;
}

.plan {
  position: relative;
  display: flex;
  flex-direction: column;
  height: 104px;
  background: #fff;
  border: 1px solid #d5d5d8;
  box-shadow: 0 1px 1px rgba(0, 0, 0, 0.1);
}

.plan.selected {
  border-color: #e5ab5c;
  box-shadow: 0 0 0 1px #e5ab5c, 0 0 2px 2px #fbe6c8;
}

.thumb {
  display: block;
  width: 100%;
  height: 71px;
  border-bottom: 1px solid #e8e8e8;
}

.plan-label {
  display: flex;
  flex: 1;
  flex-direction: column;
  justify-content: center;
  text-align: center;
  line-height: 12px;
}

.plan-label b {
  min-height: 12px;
}

.plan-label span {
  font-size: 9px;
}

.badge {
  position: absolute;
  top: 4px;
  right: 3px;
  width: 17px;
  height: 17px;
  border-radius: 50%;
  background: #6495f8;
  color: #fff;
  line-height: 17px;
  text-align: center;
}

.pick {
  position: absolute;
  top: 3px;
  left: 2px;
  width: 15px;
  height: 15px;
  margin: 0;
  appearance: none;
  background: #fff;
  border: 2px solid #e5ab5c;
  border-radius: 4px;
}

.pick:checked::before {
  content: "";
  position: absolute;
  top: 0;
  left: 4px;
  width: 4px;
  height: 8px;
  border: solid #333;
  border-width: 0 2px 2px 0;
  transform: rotate(40deg);
}

.new-plan {
  height: 104px;
  border: 2px dashed #c8c8ca;
  color: #bbb;
  font-weight: bold;
}
```
